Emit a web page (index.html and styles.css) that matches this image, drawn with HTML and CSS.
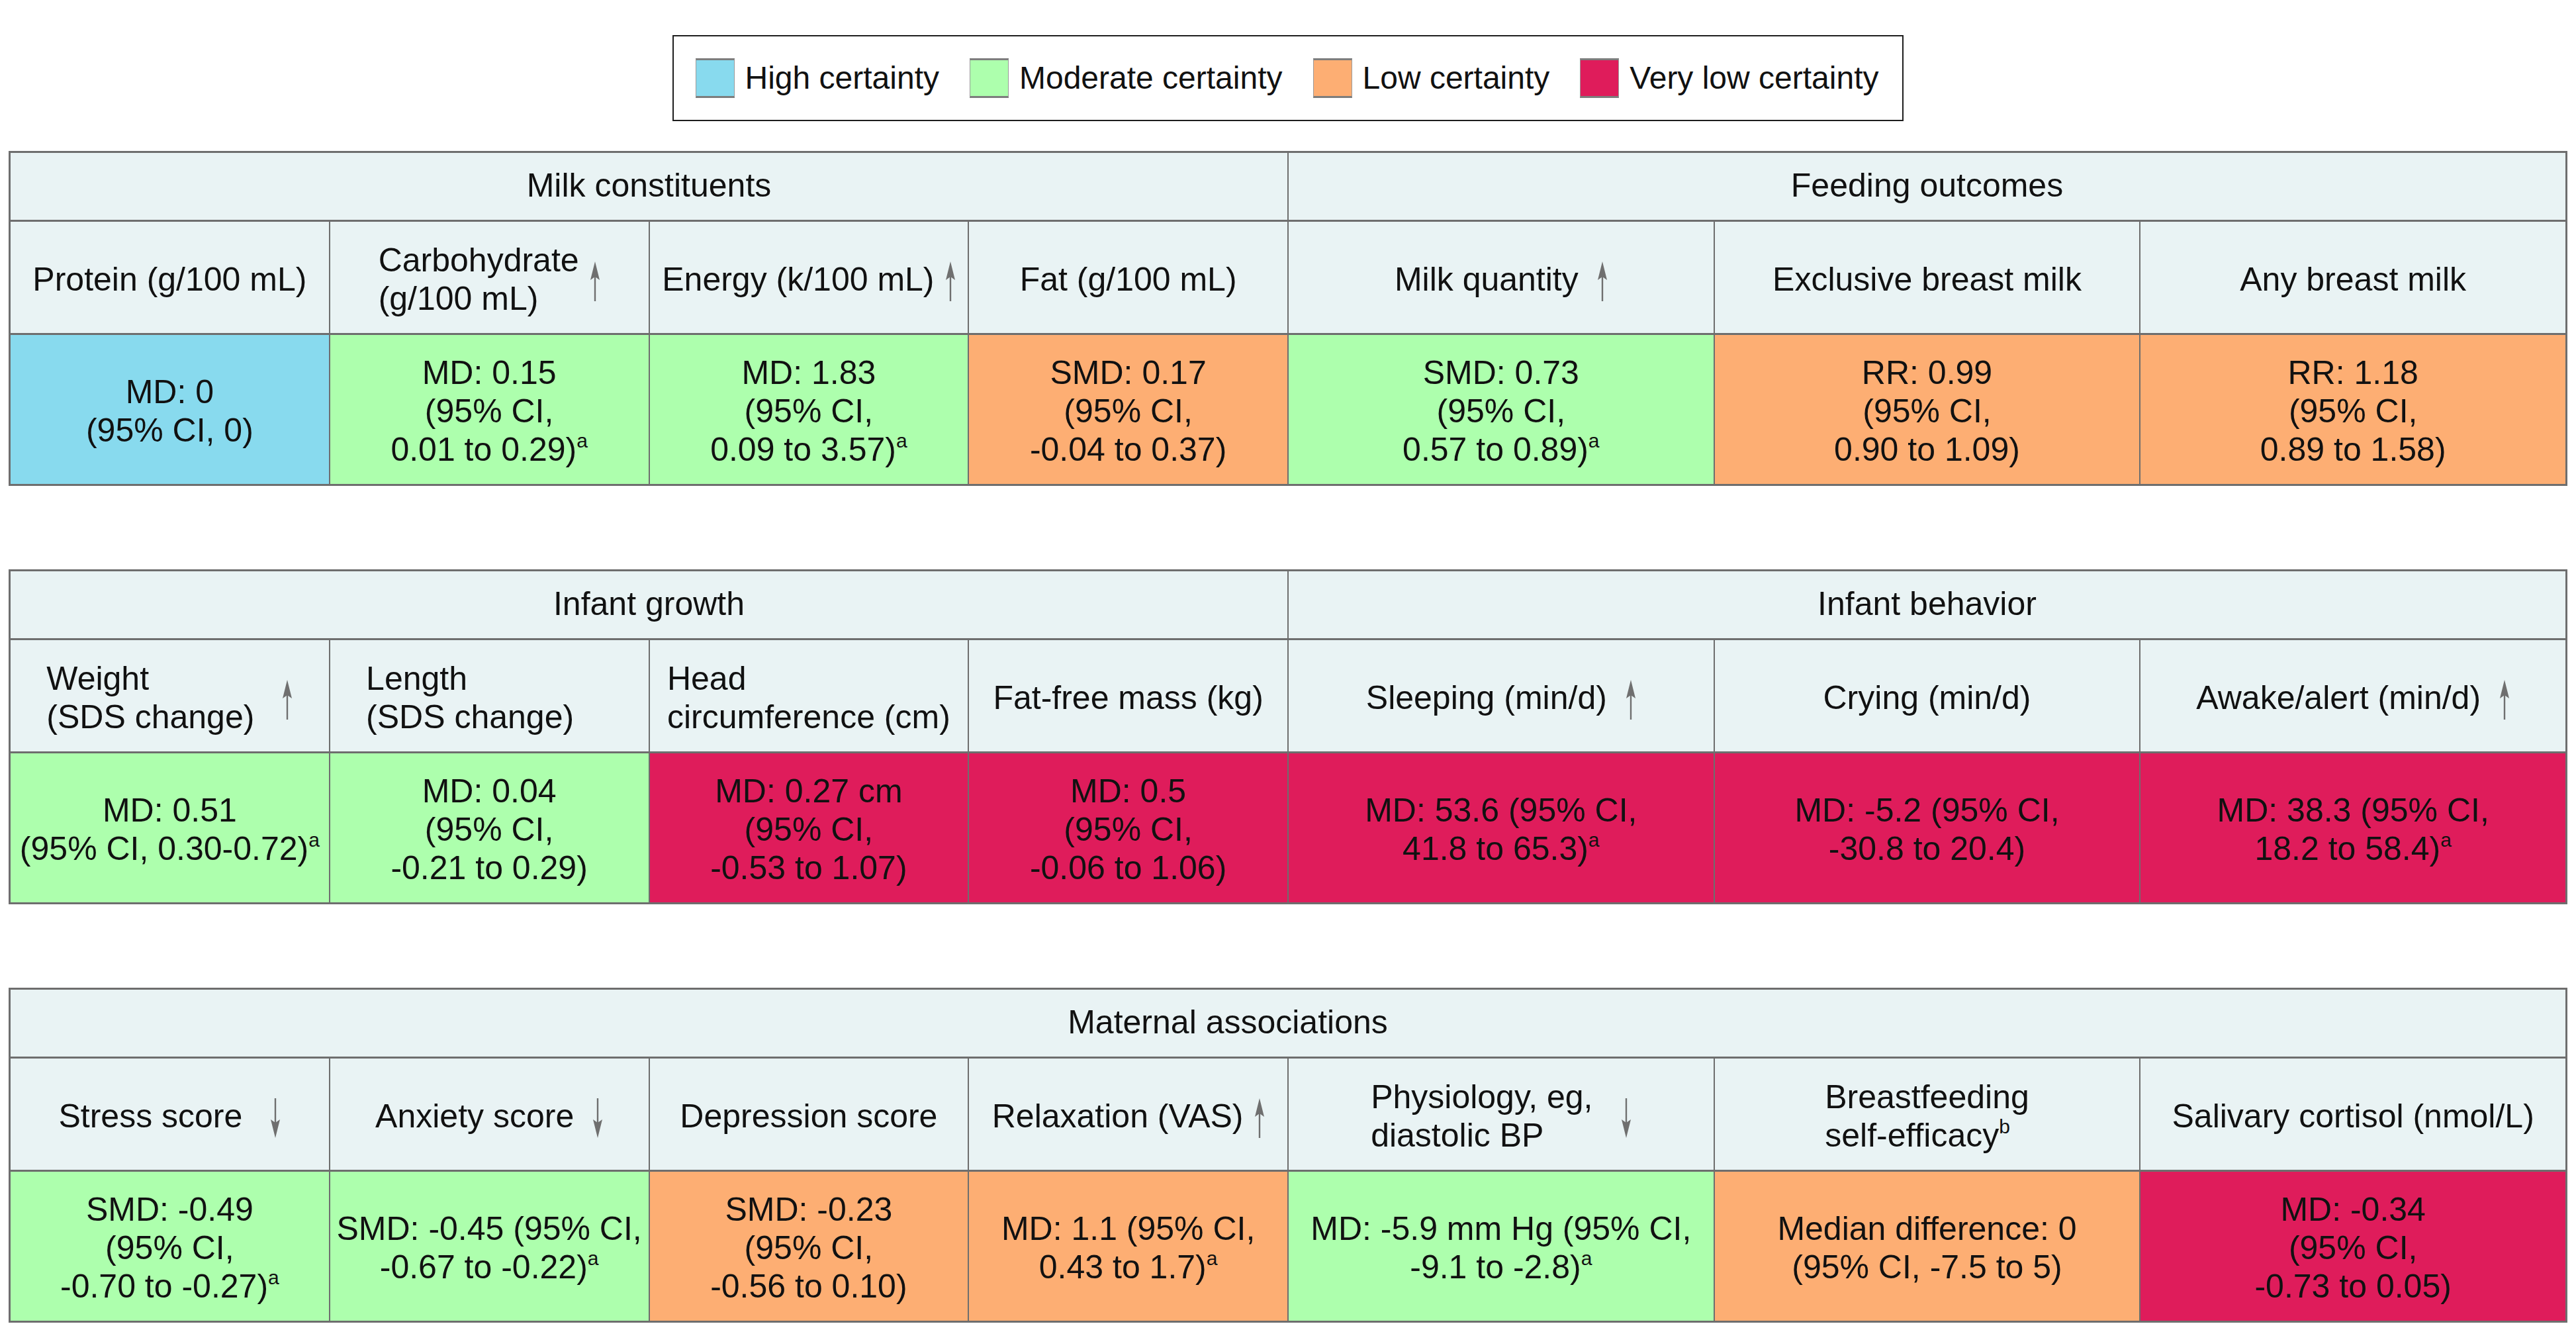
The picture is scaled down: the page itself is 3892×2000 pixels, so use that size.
FILE: index.html
```html
<!DOCTYPE html>
<html lang="en">
<head>
<meta charset="utf-8">
<title>Certainty of evidence</title>
<link rel="stylesheet" href="styles.css">
</head>
<body>
<div class="page">
  <div class="legend">
    <div class="legend-box">
      <div class="legend-item"><span class="swatch high"></span><span>High certainty</span></div>
      <div class="legend-item"><span class="swatch moderate"></span><span>Moderate certainty</span></div>
      <div class="legend-item"><span class="swatch low"></span><span>Low certainty</span></div>
      <div class="legend-item"><span class="swatch verylow"></span><span>Very low certainty</span></div>
    </div>
  </div>

  <div class="table">
    <div class="group half">Milk constituents</div>
    <div class="group half">Feeding outcomes</div>

    <div class="head left"><span class="txt">Protein (g/100 mL)</span></div>
    <div class="head left g-sm"><span class="txt">Carbohydrate<br>(g/100 mL)</span><svg class="arrow" viewBox="0 0 16 60"><path d="M8 22V60" /><polygon points="8,0 15,28 8,23 1,28" /></svg></div>
    <div class="head left g-sm"><span class="txt">Energy (k/100 mL)</span><svg class="arrow" viewBox="0 0 16 60"><path d="M8 22V60" /><polygon points="8,0 15,28 8,23 1,28" /></svg></div>
    <div class="head left"><span class="txt">Fat (g/100 mL)</span></div>
    <div class="head right g-md"><span class="txt">Milk quantity</span><svg class="arrow" viewBox="0 0 16 60"><path d="M8 22V60" /><polygon points="8,0 15,28 8,23 1,28" /></svg></div>
    <div class="head right"><span class="txt">Exclusive breast milk</span></div>
    <div class="head right"><span class="txt">Any breast milk</span></div>

    <div class="cell left high"><span class="val">MD: 0<br>(95% CI, 0)</span></div>
    <div class="cell left moderate"><span class="val">MD: 0.15<br>(95% CI,<br>0.01 to 0.29)<sup>a</sup></span></div>
    <div class="cell left moderate"><span class="val">MD: 1.83<br>(95% CI,<br>0.09 to 3.57)<sup>a</sup></span></div>
    <div class="cell left low"><span class="val">SMD: 0.17<br>(95% CI,<br>-0.04 to 0.37)</span></div>
    <div class="cell right moderate"><span class="val">SMD: 0.73<br>(95% CI,<br>0.57 to 0.89)<sup>a</sup></span></div>
    <div class="cell right low"><span class="val">RR: 0.99<br>(95% CI,<br>0.90 to 1.09)</span></div>
    <div class="cell right low"><span class="val">RR: 1.18<br>(95% CI,<br>0.89 to 1.58)</span></div>
  </div>

  <div class="table">
    <div class="group half">Infant growth</div>
    <div class="group half">Infant behavior</div>

    <div class="head left g-lg"><span class="txt">Weight<br>(SDS change)</span><svg class="arrow" viewBox="0 0 16 60"><path d="M8 22V60" /><polygon points="8,0 15,28 8,23 1,28" /></svg></div>
    <div class="head left g-lg"><span class="txt">Length<br>(SDS change)</span><span class="arrow-space"></span></div>
    <div class="head left"><span class="txt">Head<br>circumference (cm)</span></div>
    <div class="head left"><span class="txt">Fat-free mass (kg)</span></div>
    <div class="head right g-md"><span class="txt">Sleeping (min/d)</span><svg class="arrow" viewBox="0 0 16 60"><path d="M8 22V60" /><polygon points="8,0 15,28 8,23 1,28" /></svg></div>
    <div class="head right"><span class="txt">Crying (min/d)</span></div>
    <div class="head right g-md"><span class="txt">Awake/alert (min/d)</span><svg class="arrow" viewBox="0 0 16 60"><path d="M8 22V60" /><polygon points="8,0 15,28 8,23 1,28" /></svg></div>

    <div class="cell left moderate"><span class="val">MD: 0.51<br>(95% CI, 0.30-0.72)<sup>a</sup></span></div>
    <div class="cell left moderate"><span class="val">MD: 0.04<br>(95% CI,<br>-0.21 to 0.29)</span></div>
    <div class="cell left verylow"><span class="val">MD: 0.27 cm<br>(95% CI,<br>-0.53 to 1.07)</span></div>
    <div class="cell left verylow"><span class="val">MD: 0.5<br>(95% CI,<br>-0.06 to 1.06)</span></div>
    <div class="cell right verylow"><span class="val">MD: 53.6 (95% CI,<br>41.8 to 65.3)<sup>a</sup></span></div>
    <div class="cell right verylow"><span class="val">MD: -5.2 (95% CI,<br>-30.8 to 20.4)</span></div>
    <div class="cell right verylow"><span class="val">MD: 38.3 (95% CI,<br>18.2 to 58.4)<sup>a</sup></span></div>
  </div>

  <div class="table">
    <div class="group full">Maternal associations</div>

    <div class="head left g-lg"><span class="txt">Stress score</span><svg class="arrow" viewBox="0 0 16 60"><path d="M8 0V38" /><polygon points="8,60 15,32 8,37 1,32" /></svg></div>
    <div class="head left g-md"><span class="txt">Anxiety score</span><svg class="arrow" viewBox="0 0 16 60"><path d="M8 0V38" /><polygon points="8,60 15,32 8,37 1,32" /></svg></div>
    <div class="head left"><span class="txt">Depression score</span></div>
    <div class="head left g-sm"><span class="txt">Relaxation (VAS)</span><svg class="arrow" viewBox="0 0 16 60"><path d="M8 22V60" /><polygon points="8,0 15,28 8,23 1,28" /></svg></div>
    <div class="head right g-lg"><span class="txt">Physiology, eg,<br>diastolic BP</span><svg class="arrow" viewBox="0 0 16 60"><path d="M8 0V38" /><polygon points="8,60 15,32 8,37 1,32" /></svg></div>
    <div class="head right"><span class="txt">Breastfeeding<br>self-efficacy<sup>b</sup></span></div>
    <div class="head right"><span class="txt">Salivary cortisol (nmol/L)</span></div>

    <div class="cell left moderate"><span class="val">SMD: -0.49<br>(95% CI,<br>-0.70 to -0.27)<sup>a</sup></span></div>
    <div class="cell left moderate"><span class="val">SMD: -0.45 (95% CI,<br>-0.67 to -0.22)<sup>a</sup></span></div>
    <div class="cell left low"><span class="val">SMD: -0.23<br>(95% CI,<br>-0.56 to 0.10)</span></div>
    <div class="cell left low"><span class="val">MD: 1.1 (95% CI,<br>0.43 to 1.7)<sup>a</sup></span></div>
    <div class="cell right moderate"><span class="val">MD: -5.9 mm Hg (95% CI,<br>-9.1 to -2.8)<sup>a</sup></span></div>
    <div class="cell right low"><span class="val">Median difference: 0<br>(95% CI, -7.5 to 5)</span></div>
    <div class="cell right verylow"><span class="val">MD: -0.34<br>(95% CI,<br>-0.73 to 0.05)</span></div>
  </div>
</div>
</body>
</html>
```

FILE: styles.css
```css
* { box-sizing: border-box; }

html, body {
  margin: 0;
  padding: 0;
  background: #ffffff;
}

body {
  font-family: "Liberation Sans", Arial, sans-serif;
  color: #111111;
}

.page {
  width: 3892px;
  padding: 53px 13px 0 13px;
}

/* Legend */
.legend {
  display: flex;
  justify-content: center;
  margin-bottom: 45px;
}

.legend-box {
  display: flex;
  align-items: center;
  gap: 46px;
  height: 130px;
  padding: 0 36px 0 33px;
  border: 2px solid #1e1e1e;
  font-size: 48px;
  line-height: 1;
}

.legend-item {
  display: flex;
  align-items: center;
  gap: 16px;
}

.swatch {
  display: block;
  width: 59px;
  height: 60px;
  border-top: 3px solid #7d7d7d;
  border-bottom: 3px solid #7d7d7d;
  border-left: 1px solid #9a9a9a;
  border-right: 1px solid #9a9a9a;
}

/* Certainty colours */
.high { background: #88daee; }
.moderate { background: #adffad; }
.low { background: #fdae73; }
.verylow { background: #df1c5b; }

/* Tables */
.table {
  display: grid;
  grid-template-columns: repeat(24, 1fr);
  grid-template-rows: 101px 168px 225px;
  column-gap: 2px;
  row-gap: 3px;
  background: #6e6e6e;
  border: 3px solid #6e6e6e;
  margin-bottom: 126px;
  font-size: 50px;
  line-height: 58px;
}

.table:last-child {
  margin-bottom: 0;
}

.group {
  background: #e9f3f4;
  display: flex;
  align-items: center;
  justify-content: center;
  padding-bottom: 4px;
  white-space: nowrap;
}

.group.half { grid-column: span 12; }

.group.full {
  grid-column: span 24;
  padding-right: 182px;
}

.head {
  background: #e9f3f4;
  display: flex;
  align-items: center;
  justify-content: center;
  gap: 20px;
  white-space: nowrap;
  padding-top: 6px;
}

.head.left, .cell.left { grid-column: span 3; }
.head.right, .cell.right { grid-column: span 4; }

.head.g-sm { gap: 16px; }
.head.g-md { gap: 28px; }
.head.g-lg { gap: 42px; }

.txt {
  display: block;
  text-align: left;
}

.arrow {
  display: block;
  width: 16px;
  height: 60px;
  flex: none;
  margin-top: 6px;
}

.arrow path {
  stroke: #6f6f6f;
  stroke-width: 2.4;
  fill: none;
}

.arrow polygon {
  fill: #6f6f6f;
}

.arrow-space {
  display: block;
  width: 16px;
  height: 60px;
  flex: none;
}

.cell {
  display: flex;
  align-items: center;
  justify-content: center;
  text-align: center;
  white-space: nowrap;
  padding-top: 4px;
}

.val {
  display: block;
}

sup {
  font-size: 30px;
  line-height: 0;
  vertical-align: 0;
  position: relative;
  top: -20px;
}
```
